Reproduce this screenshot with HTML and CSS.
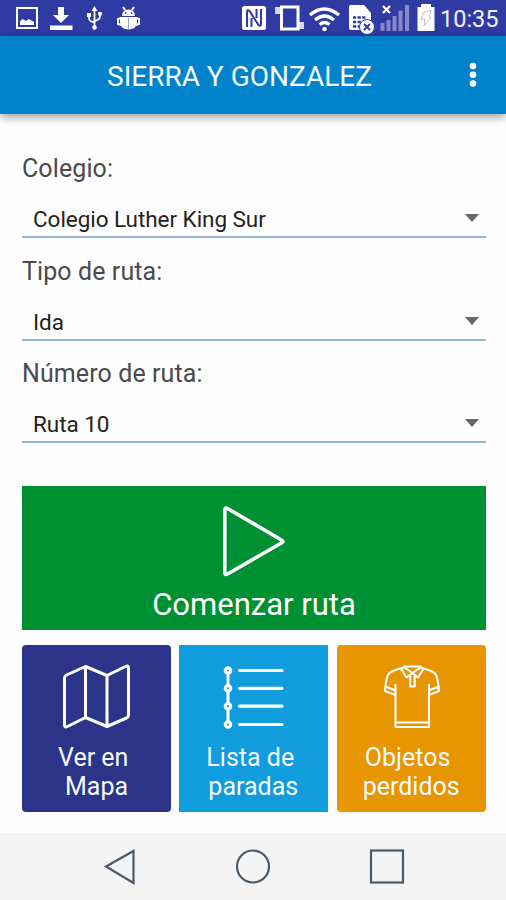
FILE: index.html
```html
<!DOCTYPE html>
<html lang="es">
<head>
<meta charset="utf-8">
<title>Sierra y Gonzalez</title>
<link rel="stylesheet" href="styles.css">
</head>
<body>
<div class="screen">
  <div class="status">
    <svg class="status-left" width="150" height="36" viewBox="0 0 150 36" fill="none" stroke="#fff">
      <rect x="17" y="8" width="20" height="20" stroke-width="2"/>
      <path d="M20 25v-4l3-2 3 2 3-2 5 3v3z" fill="#fff" stroke="none"/>
      <path d="M58 7h6v8h5l-8 8-8-8h5z M50 25.500h22.500v4.500h-22.500z" fill="#fff" stroke="none"/>
      <path d="M94.500 10v17M89 14v4.500q0 2.500 5.500 4M100 13v3.500q0 3-5.500 4.500" stroke-width="1.800"/>
      <path d="M94.500 6l3 5h-6z M87 13h4v4h-4z M98.200 12h3.600v3.600h-3.600z" fill="#fff" stroke="none"/>
      <circle cx="94.500" cy="27.500" r="2.300" fill="#fff" stroke="none"/>
      <path d="M122 16q0-6.500 6.500-6.500t6.500 6.500z M120 17h17v5.500q-1 7-8.500 7t-8.500-7z" fill="#fff" stroke="none"/>
      <path d="M125 10l-2-3M132 10l2-3M121 18l-3 1v5l3 1M136 18l3 1v5l-3 1" stroke-width="2"/>
      <path d="M128.500 18v11" stroke="#9a9fd4"/>
      <path d="M125 13h1.500M131 13h1.500" stroke="#303aa3" stroke-width="1.500"/>
    </svg>
    <svg class="status-right" width="200" height="36" viewBox="240 0 200 36" fill="none" stroke="#fff">
      <rect x="242" y="6" width="24" height="24" rx="2.500" fill="#fff" stroke="none"/>
      <path d="M247 27V12q0-3 2.500-1l9 14q2.500 2 2.500-1V9M251.500 27V18M256.500 9v9" stroke="#303aa3" stroke-width="2"/>
      <path d="M275 7h6v7h-6z M299 22h5v7h-5z" fill="#fff" stroke="none" opacity=".8"/>
      <rect x="281.500" y="7" width="16.500" height="22" stroke-width="3" fill="#303aa3"/>
      <path d="M310 15q14-12 29 0M315 20q9.500-8 19 0M319.500 24.500q5-4 10 0" stroke-width="3.200"/>
      <circle cx="324.500" cy="29" r="2.300" fill="#fff" stroke="none"/>
      <path d="M349 6.500q0-1.500 2-1.500h13l7 8v17h-20q-2 0-2-2z" fill="#fff" stroke="none"/>
      <path d="M353 17.500h13M353 22h10M353 26.500h7" stroke="#303aa3" stroke-width="2.500" stroke-dasharray="3.200 1.400"/>
      <circle cx="367" cy="27" r="7.500" fill="#fff" stroke="#303aa3"/>
      <path d="M364 24l6 6M370 24l-6 6" stroke="#303aa3" stroke-width="2"/>
      <path d="M382.500 31v-8M388.500 31V20M394.500 31V16M400.500 31V10.500M407 31V5" stroke="#858ac9" stroke-width="4"/>
      <path d="M383 6l7 7M390 6l-7 7" stroke-width="2.300"/>
      <path d="M421 4h10v3h3.500v24h-17V7h3.500z" fill="#fff" stroke="none"/>
      <path d="M425 12l6-2-2 7h2l-7 9 1-7h-4l3-7z" stroke="#c3c3cc" stroke-width="1"/>
    </svg>
    <span class="clock">10:35</span>
  </div>
  <header class="appbar">
    <h1 class="title">SIERRA Y GONZALEZ</h1>
    <svg class="more" width="10" height="26" viewBox="0 0 10 26" fill="#fff"><circle cx="5" cy="4" r="3.300"/><circle cx="5" cy="12.800" r="3.300"/><circle cx="5" cy="21.500" r="3.300"/></svg>
  </header>
  <main class="content">
    <div class="field">
      <div class="label">Colegio:</div>
      <div class="select"><span>Colegio Luther King Sur</span><i class="caret"></i></div>
    </div>
    <div class="field">
      <div class="label">Tipo de ruta:</div>
      <div class="select"><span>Ida</span><i class="caret"></i></div>
    </div>
    <div class="field">
      <div class="label">Número de ruta:</div>
      <div class="select"><span>Ruta 10</span><i class="caret"></i></div>
    </div>
    <div class="start">
      <svg width="70" height="76" viewBox="1.500 -0.500 70 76" fill="none" stroke="#fff" stroke-width="3.600" stroke-linejoin="round"><path d="M7.300 6.500Q7.300 3.500 10 5L64 36.500Q67 38 64 39.500L10 70.500Q7.300 72 7.300 69z"/></svg>
      <span class="start-text">Comenzar ruta</span>
    </div>
    <div class="tiles">
      <div class="tile map">
        <svg width="149" height="96" viewBox="0.500 0 149 96" fill="none" stroke="#fff" stroke-width="3" stroke-linejoin="round"><path d="M43 33Q43 31 45 30L64 21.500L85.500 30.500L104 21.500Q107 20 107 23V70Q107 72 105 73L85.500 81.500L64 72.500L46 81.500Q43 83 43 80zM64 21.500v51M85.500 30.500v51"/></svg>
        <p><span class="t-ver">Ver en</span><br><span class="t-mapa">Mapa</span></p>
      </div>
      <div class="tile stops">
        <svg width="149" height="96" viewBox="0 0 149 96" fill="none" stroke="#fff" stroke-width="3.200" stroke-linecap="round"><path d="M49 25v54" stroke-width="3"/><path d="M60.500 25.500h42.500M60.500 43.300h42.500M60.500 61.200h42.500M60.500 79.500h42.500"/><g fill="#109cdd" stroke-width="3.200"><circle cx="49" cy="25.500" r="2.700"/><circle cx="49" cy="43.300" r="2.700"/><circle cx="49" cy="61.200" r="2.700"/><circle cx="49" cy="79.500" r="2.700"/></g></svg>
        <p><span class="t-lista">Lista de</span><br><span class="t-paradas">paradas</span></p>
      </div>
      <div class="tile lost">
        <svg width="149" height="96" viewBox="0 0 149 96" fill="none" stroke="#fff" stroke-width="2.100" stroke-linejoin="round"><path d="M58.500 39v43h33.500V39M58.500 77.500H92M58.500 50l-10.500-4q1-15 4.500-18 2-2 14-5.500M92 50l10-4q-1-15-4.500-18-2-2-14-5.500M48.500 41.500l10 4M101.500 41.500l-9.500 4M67 21.500h17l2 3-5 8-5.500-4.500-6 4.500-5-8zM67.500 22.500l8 5.500 8-5.500M73.200 31v10.500h4.500V31"/></svg>
        <p><span class="t-objetos">Objetos</span><br><span class="t-perdidos">perdidos</span></p>
      </div>
    </div>
  </main>
  <nav class="navbar">
    <svg width="34" height="36" viewBox="0 0 34 36"><path d="M3 17.500L30.500 2v32z"/></svg>
    <svg width="36" height="36" viewBox="0 0 36 36"><circle cx="18" cy="17.500" r="16"/></svg>
    <svg width="36" height="36" viewBox="0 0 36 36"><rect x="2" y="1.500" width="32" height="32"/></svg>
  </nav>
</div>
</body>
</html>
```

FILE: styles.css
```css
* { box-sizing: border-box; }
body { margin: 0; font-family: Roboto, "Liberation Sans", sans-serif; background: #fefefe; }
.screen { width: 506px; height: 900px; display: flex; flex-direction: column; overflow: hidden; }
svg { display: block; flex: none; }

.status { height: 36px; background: #303aa3; display: flex; align-items: center; flex: none; }
.status-right { margin-left: 90px; }
.clock { color: #f2f3ff; font-size: 23.500px; line-height: 36px; padding-top: 2px; white-space: nowrap; }

.appbar { height: 78px; flex: none; background: #0083ca; display: flex; align-items: center; box-shadow: 0 3px 9px rgba(0, 0, 0, .38); }
.title { margin: 4px 0 0 107px; width: 361px; font-size: 28px; line-height: 34px; font-weight: 400; color: #f3faff; white-space: nowrap; }

.content { padding: 40px 20px 0 22px; height: 719px; flex: none; }
.field { height: 84px; margin-bottom: 18.600px; width: 464px; }
.label { height: 30px; font-size: 25px; letter-spacing: .1px; line-height: 30px; color: #4a4a4a; white-space: nowrap; }
.select { height: 54px; padding: 21px 7px 0 11px; border-bottom: 2px solid #94b4d8; display: flex; justify-content: space-between; font-size: 22.500px; letter-spacing: -.05px; line-height: 28px; color: #222; white-space: nowrap; }
.caret { margin-top: 9px; width: 0; height: 0; border: solid transparent; border-width: 8px 7px 0; border-top-color: #666; }

.start { margin-top: 42.700px; width: 464px; height: 144.500px; background: #009034; display: flex; flex-direction: column; align-items: center; padding-top: 17px; color: #fff; }
.start-text { font-size: 31px; line-height: 36px; margin-top: 8.500px; white-space: nowrap; }
.tiles { display: flex; gap: 8.500px; margin-top: 14.700px; width: 463.600px; }
.tile { flex: 1; height: 166.500px; overflow: hidden; color: #f6faff; }
.tile p { margin: 2px 0 0; font-size: 25px; line-height: 29px; white-space: nowrap; }
.map { background: #2b3488; border-radius: 4px; }
.stops { background: #109cdd; }
.lost { background: #e79500; border-radius: 4px; }
.t-ver { margin-left: 36px; }
.t-mapa { margin-left: 43px; }
.t-lista { margin-left: 27px; }
.t-paradas { margin-left: 29px; }
.t-objetos { margin-left: 28px; }
.t-perdidos { margin-left: 26px; }

.navbar { height: 67px; flex: none; background: #f4f4f4; display: flex; justify-content: space-between; padding: 16px 101px 0 103px; }
.navbar svg { fill: none; stroke: #4b5a66; stroke-width: 2.200; }
```
